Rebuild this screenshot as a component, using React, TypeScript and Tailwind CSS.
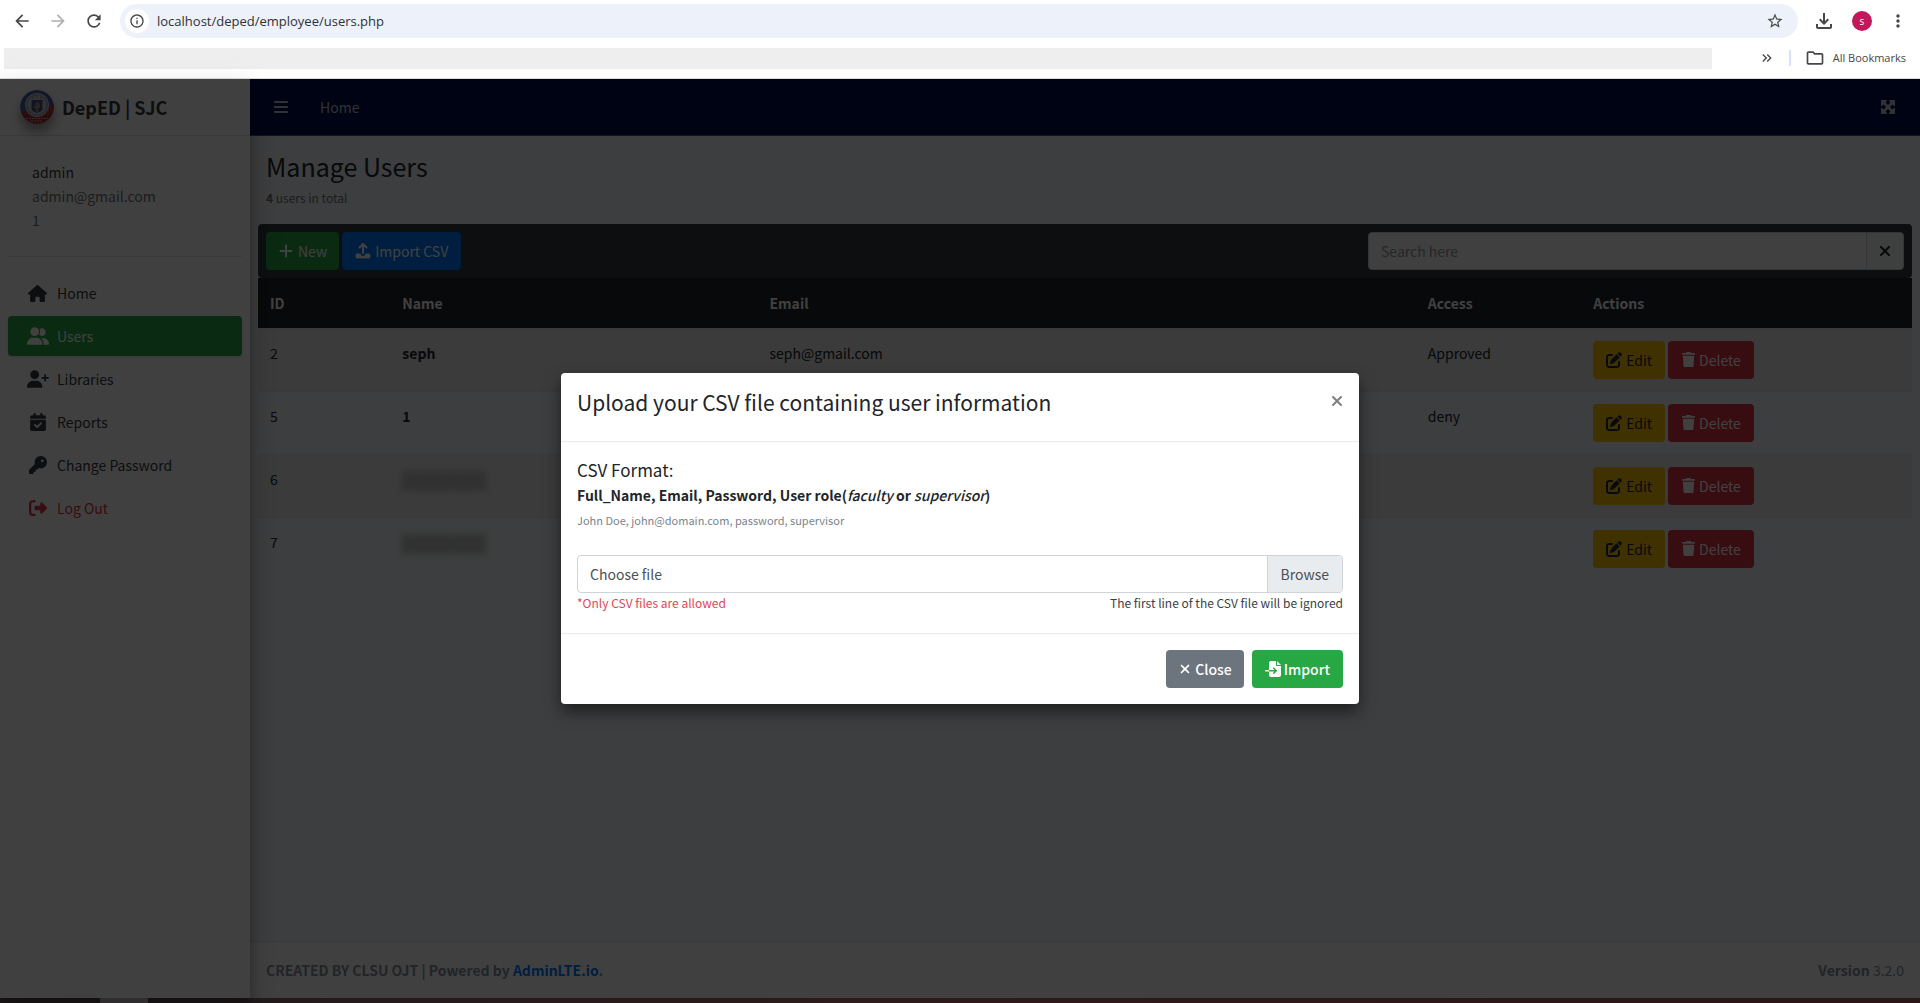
import React from "react";
import {
  FaHouse, FaUserGroup, FaUserPlus, FaCalendarCheck, FaKey, FaRightFromBracket,
  FaPlus, FaXmark, FaPenToSquare, FaTrash, FaFileImport, FaBars, FaMaximize,
} from "react-icons/fa6";
import {
  MdArrowBack, MdArrowForward, MdRefresh, MdInfoOutline, MdStarBorder,
  MdMoreVert, MdKeyboardDoubleArrowRight, MdOutlineFolder, MdOutlineFileDownload,
} from "react-icons/md";

const users = [
  { id: 2, name: "seph", email: "seph@gmail.com", access: "Approved" },
  { id: 5, name: "1", email: "", access: "deny" },
  { id: 6, name: null, email: "", access: "" },
  { id: 7, name: null, email: "", access: "" },
];

const links = [
  { label: "Home", icon: FaHouse, size: 19, tone: "text-[#343a40]" },
  { label: "Users", icon: FaUserGroup, size: 22, tone: "bg-[#28a745] text-white shadow" },
  { label: "Libraries", icon: FaUserPlus, size: 22, tone: "text-[#343a40]" },
  { label: "Reports", icon: FaCalendarCheck, size: 18, tone: "text-[#343a40]" },
  { label: "Change Password", icon: FaKey, size: 18, tone: "text-[#343a40]" },
  { label: "Log Out", icon: FaRightFromBracket, size: 18, tone: "text-[#dc3545]" },
];

function BrowserBar() {
  return (
    <header className="h-[79px] shrink-0 border-b border-[#dcdcdc] bg-white font-['Open_Sans',sans-serif] text-[#474747]">
      <div className="flex h-[42px] items-center pr-3">
        <nav aria-label="Browser" className="flex w-[120px] items-center gap-4 pl-3">
          <button aria-label="Back"><MdArrowBack size={20} /></button>
          <button aria-label="Forward" className="text-[#b0b0b0]"><MdArrowForward size={20} /></button>
          <button aria-label="Reload"><MdRefresh size={20} /></button>
        </nav>
        <div className="flex h-[34px] flex-1 items-center rounded-full bg-[#edf1fa] pr-[14px] pl-[5px]">
          <span className="flex size-6 items-center justify-center rounded-full bg-white"><MdInfoOutline size={16} /></span>
          <input aria-label="Address" defaultValue="localhost/deped/employee/users.php" className="ml-2 flex-1 bg-transparent pt-px text-[13px] text-[#303134] outline-none" />
          <button aria-label="Bookmark this page"><MdStarBorder size={18} /></button>
        </div>
        <div className="flex items-center gap-4 pl-[14px]">
          <button aria-label="Downloads"><MdOutlineFileDownload size={24} /></button>
          <button aria-label="Profile" className="flex size-5 items-center justify-center rounded-full bg-[#c2185b] text-[10px] text-white">s</button>
          <button aria-label="Menu"><MdMoreVert size={20} /></button>
        </div>
      </div>
      <div className="flex h-[32px] items-center pr-[14px] pl-1">
        <div className="h-[21px] flex-1 bg-[#eeeeee]" />
        <div className="flex w-[194px] items-center justify-end">
          <button aria-label="More bookmarks"><MdKeyboardDoubleArrowRight size={16} /></button>
          <span className="mr-[14px] ml-[14px] h-4 w-[2px] bg-[#d3e3fd]" />
          <button className="flex items-center gap-2 text-[11px]"><MdOutlineFolder size={20} />All Bookmarks</button>
        </div>
      </div>
    </header>
  );
}

function Seal() {
  return (
    <svg viewBox="0 0 34 34" className="size-[34px] rounded-full shadow-[0_8px_12px_rgba(0,0,0,0.4)]" aria-hidden="true">
      <circle cx="17" cy="17" r="17" fill="#4a5f9c" />
      <path d="M34 14a17 17 0 0 1-33 8l16-2Z" fill="#a83a40" />
      <path d="M1 22a17 17 0 0 0 32 0l-8 3H9Z" fill="#a83238" />
      <circle cx="17" cy="15" r="12" fill="#c6cad8" />
      <circle cx="17" cy="15" r="10" fill="none" stroke="#66759b" strokeWidth="1.5" strokeDasharray="1 1" />
      <path d="M11.500 10h11v9c0 2-3 3-5.500 4-2.500-1-5.500-2-5.500-4Z" fill="#3f5590" />
      <path d="M17 12v10M15 14h4v3h-4l3 3" stroke="#c99858" strokeWidth="1.500" fill="none" />
      <path d="M12 8h2M16 7h2M20 8h2" stroke="#c99858" strokeWidth="1.500" />
      <path d="M6 28.500h22M11 31h12" stroke="#d8a9ab" strokeWidth="1.200" strokeDasharray="2 1" />
    </svg>
  );
}

function UploadIcon() {
  return (
    <svg viewBox="0 0 16 16" className="size-4" fill="none" stroke="currentColor" strokeWidth="2" strokeLinecap="round" strokeLinejoin="round" aria-hidden="true">
      <path d="M8 10V1.500M4.500 4.500 8 1l3.500 3.500" />
      <path d="M2 11h3.500a2.500 2.500 0 0 0 5 0H14a1 1 0 0 1 1 1v2a1 1 0 0 1-1 1H2a1 1 0 0 1-1-1v-2a1 1 0 0 1 1-1Zm10.500 1.500a.5.5 0 1 0 .01 0Z" fill="currentColor" fillRule="evenodd" strokeWidth="0.8" />
    </svg>
  );
}

function Sidebar() {
  return (
    <aside className="z-10 w-[250px] shrink-0 bg-white shadow-[0_14px_28px_rgba(0,0,0,0.25),0_10px_10px_rgba(0,0,0,0.22)]">
      <a href="#home" className="flex h-[57px] items-center gap-2 border-b border-[#dee2e6] pl-5 text-[18px] font-bold text-[#343a40]">
        <Seal />
        DepED | SJC
      </a>
      <div className="mx-2 mb-4 border-b border-[#dee2e6] px-6 pt-6 pb-6 leading-6 text-[#6c757d]">
        <p className="text-[#343a40]">admin</p>
        <p>admin@gmail.com</p>
        <p>1</p>
      </div>
      <nav aria-label="Main" className="flex flex-col gap-[3px] px-2">
        {links.map(({ label, icon: Icon, size, tone }) => (
          <a key={label} href="#menu" className={`flex h-10 items-center gap-2 rounded pl-[18px] ${tone}`}>
            <span className="flex w-[23px] justify-center"><Icon size={size} /></span>
            <span>{label}</span>
          </a>
        ))}
      </nav>
    </aside>
  );
}

function UserTable() {
  return (
    <table className="w-full table-fixed text-left text-[#212529]">
      <colgroup>
        <col className="w-[8%]" /><col className="w-[22.200%]" /><col className="w-[39.800%]" /><col className="w-[10%]" /><col className="w-[20%]" />
      </colgroup>
      <thead className="bg-[#212529] text-white">
        <tr className="h-[50px]">
          {["ID", "Name", "Email", "Access", "Actions"].map((h) => <th key={h} scope="col" className="px-3 font-bold">{h}</th>)}
        </tr>
      </thead>
      <tbody>
        {users.map((u) => (
          <tr key={u.id} className="h-[63px] border-t border-[#dee2e6] align-top odd:bg-[#e7eae7]">
            <td className="px-3 pt-3 leading-6">{u.id}</td>
            <td className="px-3 pt-3 leading-6 font-bold">
              {u.name ?? <div aria-label="Hidden name" className="mt-1 h-5 w-[84px] bg-[repeating-linear-gradient(90deg,#bcbfbd_0px,#bcbfbd_8px,#c6c9c7_10px,#c6c9c7_13px)] blur-[3px]" />}
            </td>
            <td className="px-3 pt-3 leading-6">{u.email}</td>
            <td className="px-3 pt-3 leading-6">{u.access}</td>
            <td className="px-3 pt-3">
              <div className="flex gap-[3px]">
                <button className="flex h-[38px] items-center gap-1 rounded bg-[#ffc107] px-[13px] text-[#1f2d3d]"><FaPenToSquare size={16} />Edit</button>
                <button className="flex h-[38px] items-center gap-[3px] rounded bg-[#dc3545] px-[13px] text-white"><FaTrash size={15} />Delete</button>
              </div>
            </td>
          </tr>
        ))}
      </tbody>
    </table>
  );
}

function UploadDialog() {
  return (
    <section role="dialog" aria-modal="true" aria-labelledby="upload-title" className="mt-[294px] w-[798px] rounded bg-white text-[#212529] shadow-[0_8px_16px_rgba(0,0,0,0.5)]">
      <div className="flex h-[69px] items-start justify-between border-b border-[#e9ecef] px-4 pt-3">
        <h2 id="upload-title" className="text-[21px] leading-[34px]">Upload your CSV file containing user information</h2>
        <button aria-label="Dismiss" className="mt-2 -mr-0.5 text-[#7f7f7f]"><FaXmark size={16} /></button>
      </div>
      <div className="h-[192px] border-b border-[#e9ecef] px-4 pt-4">
        <h3 className="text-[17px] leading-6">CSV Format:</h3>
        <p className="leading-[26px] font-bold">Full_Name, Email, Password, User role(<i className="font-medium">faculty</i> or <i className="font-medium">supervisor</i>)</p>
        <p className="text-[11px] leading-6 text-[#7b848c]">John Doe, john@domain.com, password, supervisor</p>
        <label className="mt-[23px] flex h-[38px] items-stretch overflow-hidden rounded border border-[#ced4da] text-[#495057]">
          <span className="flex flex-1 items-center px-3">Choose file</span>
          <span className="flex items-center border-l border-[#ced4da] bg-[#e9ecef] px-[13px]">Browse</span>
          <input type="file" accept=".csv" className="sr-only" />
        </label>
        <div className="flex justify-between text-[12px] leading-5">
          <span className="text-[#e04656]">*Only CSV files are allowed</span>
          <span className="text-[#3c4044]">The first line of the CSV file will be ignored</span>
        </div>
      </div>
      <div className="flex h-[70px] items-center justify-end gap-2 px-4 font-medium text-white">
        <button className="flex h-[38px] items-center gap-[3px] rounded bg-[#6c757d] px-3"><FaXmark size={14} />Close</button>
        <button className="flex h-[38px] items-center gap-[3px] rounded bg-[#28a745] px-[13px]"><FaFileImport size={16} />Import</button>
      </div>
    </section>
  );
}

export default function App() {
  return (
    <div className="flex min-h-screen flex-col">
      <BrowserBar />
      <div className="relative flex flex-1 font-['Noto_Sans_CJK_SC',sans-serif] text-[14px] leading-6">
        <Sidebar />
        <div className="flex min-w-0 flex-1 flex-col bg-[#f4f6f9]">
          <nav aria-label="Top" className="flex h-[57px] items-center border-b border-[#4b545c] bg-[#000d50] pr-6 pl-[23px] text-[#c2c7d0]">
            <button aria-label="Toggle menu"><FaBars size={16} /></button>
            <a href="#home" className="ml-[31px] flex-1">Home</a>
            <button aria-label="Full screen"><FaMaximize size={16} /></button>
          </nav>
          <main className="flex-1 px-2">
            <div className="px-2 pt-3 pb-[14px]">
              <h1 className="text-[25px] leading-9 text-[#212529]">Manage Users</h1>
              <p className="pt-0.5 text-[12px] text-[#6c757d]"><b>4</b> users in total</p>
            </div>
            <div className="flex h-[54px] items-center justify-between rounded bg-[#343a40] px-2">
              <div className="flex gap-[3px] text-white">
                <button className="flex h-[38px] items-center gap-1 rounded bg-[#28a745] px-3"><FaPlus size={16} />New</button>
                <button className="flex h-[38px] items-center gap-1 rounded bg-[#007bff] px-[13px]"><UploadIcon />Import CSV</button>
              </div>
              <div className="flex h-[38px] w-[536px] overflow-hidden rounded border border-[#ced4da] bg-white">
                <input aria-label="Search" placeholder="Search here" className="flex-1 px-3 outline-none placeholder:text-[#939ba2]" />
                <button aria-label="Clear search" className="flex w-[37px] items-center justify-center border-l border-[#ced4da] bg-[#f8f9fa] text-[#212529]"><FaXmark size={16} /></button>
              </div>
            </div>
            <UserTable />
          </main>
          <footer className="flex h-[57px] items-center justify-between border-t border-[#dee2e6] bg-white px-4 text-[#869099]">
            <b>CREATED BY CLSU OJT | Powered by <a href="#adminlte" className="text-[#007bff]">AdminLTE.io</a>.</b>
            <span><b>Version</b> 3.2.0</span>
          </footer>
        </div>
        <div className="absolute inset-0 z-20 flex items-start justify-center bg-black/75">
          <UploadDialog />
        </div>
      </div>
      <div className="flex h-[5px] bg-linear-to-r from-[#201a1d] via-[#2e1a1c] to-[#2a1618]">
        <span className="ml-[100px] w-12 bg-[#4e4849]" />
      </div>
    </div>
  );
}
